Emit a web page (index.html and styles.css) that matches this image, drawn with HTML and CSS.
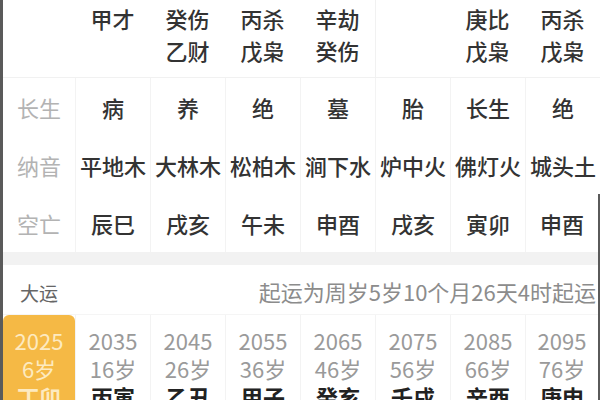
FILE: index.html
```html
<!DOCTYPE html>
<html lang="zh-CN">
<head>
<meta charset="utf-8">
<title>八字排盘</title>
<link rel="stylesheet" href="styles.css">
</head>
<body>
<div class="frame">
  <div class="pillars">
    <div class="row row-hidden">
      <div class="label"></div>
      <div class="cell"><span>甲才</span></div>
      <div class="cell"><span>癸伤</span><span>乙财</span></div>
      <div class="cell"><span>丙杀</span><span>戊枭</span></div>
      <div class="cell"><span>辛劫</span><span>癸伤</span></div>
      <div class="cell"></div>
      <div class="cell"><span>庚比</span><span>戊枭</span></div>
      <div class="cell"><span>丙杀</span><span>戊枭</span></div>
    </div>
    <div class="row">
      <div class="label">长生</div>
      <div class="cell">病</div>
      <div class="cell">养</div>
      <div class="cell">绝</div>
      <div class="cell">墓</div>
      <div class="cell">胎</div>
      <div class="cell">长生</div>
      <div class="cell">绝</div>
    </div>
    <div class="row">
      <div class="label">纳音</div>
      <div class="cell">平地木</div>
      <div class="cell">大林木</div>
      <div class="cell">松柏木</div>
      <div class="cell">涧下水</div>
      <div class="cell">炉中火</div>
      <div class="cell">佛灯火</div>
      <div class="cell">城头土</div>
    </div>
    <div class="row row-last">
      <div class="label">空亡</div>
      <div class="cell">辰巳</div>
      <div class="cell">戌亥</div>
      <div class="cell">午未</div>
      <div class="cell">申酉</div>
      <div class="cell">戌亥</div>
      <div class="cell">寅卯</div>
      <div class="cell">申酉</div>
    </div>
  </div>
  <div class="band"></div>
  <div class="dayun">
    <div class="dy-head">
      <span class="dy-title">大运</span>
      <span class="dy-info">起运为周岁5岁10个月26天4时起运</span>
    </div>
    <div class="dy-row">
      <div class="dy-cell active"><span class="yr">2025</span><span class="age">6岁</span><span class="gz">丁卯</span></div>
      <div class="dy-cell"><span class="yr">2035</span><span class="age">16岁</span><span class="gz">丙寅</span></div>
      <div class="dy-cell"><span class="yr">2045</span><span class="age">26岁</span><span class="gz">乙丑</span></div>
      <div class="dy-cell"><span class="yr">2055</span><span class="age">36岁</span><span class="gz">甲子</span></div>
      <div class="dy-cell"><span class="yr">2065</span><span class="age">46岁</span><span class="gz">癸亥</span></div>
      <div class="dy-cell"><span class="yr">2075</span><span class="age">56岁</span><span class="gz">壬戌</span></div>
      <div class="dy-cell"><span class="yr">2085</span><span class="age">66岁</span><span class="gz">辛酉</span></div>
      <div class="dy-cell"><span class="yr">2095</span><span class="age">76岁</span><span class="gz">庚申</span></div>
    </div>
  </div>
</div>
</body>
</html>
```
FILE: styles.css
```css
* { box-sizing: border-box; }
html, body {
  margin: 0;
  padding: 0;
  background: #ffffff;
  overflow: hidden;
}
body {
  width: 600px;
  height: 400px;
  font-family: "Noto Sans CJK SC", "Noto Sans", sans-serif;
}
.frame {
  width: 600px;
  height: 400px;
  border-left: 3px solid #5a5a5a;
  overflow: hidden;
}
.row {
  display: grid;
  grid-template-columns: 72px repeat(6, 75px) 1fr;
  height: 58px;
}
.row-hidden {
  height: 78px;
  border-bottom: 1px solid #f1f1f1;
}
.label {
  display: flex;
  align-items: center;
  justify-content: center;
  font-size: 22px;
  color: #b3b3b3;
}
.cell {
  display: flex;
  flex-direction: column;
  align-items: center;
  justify-content: center;
  font-size: 22px;
  font-weight: 500;
  color: #333333;
  border-left: 1px solid #f3f3f3;
  white-space: nowrap;
}
.row-hidden .cell {
  justify-content: flex-start;
  padding-top: 2px;
  line-height: 32px;
  border-left: none;
}
.row-hidden .cell:nth-child(6) {
  border-left: 1px solid #f1f1f1;
}
.row-last {
  border-right: 2px solid #5a5a5a;
}
.band {
  height: 13px;
  background: #f2f2f2;
  border-right: 2px solid #5a5a5a;
}
.dayun {
  border-right: 2px solid #5a5a5a;
}
.dy-head {
  height: 50px;
  display: flex;
  justify-content: space-between;
  align-items: flex-end;
  padding: 0 2px 12px 17px;
  border-bottom: 1px solid #f5f5f5;
}
.dy-title {
  font-size: 19px;
  line-height: 19px;
  color: #666666;
}
.dy-info {
  font-size: 22px;
  line-height: 22px;
  color: #8c8c8c;
}
.dy-row {
  display: grid;
  grid-template-columns: 72px repeat(6, 75px) 1fr;
  height: 90px;
}
.dy-cell {
  display: flex;
  flex-direction: column;
  align-items: center;
  padding-top: 11px;
  line-height: 28px;
  font-size: 22px;
  border-left: 1px solid #f3f3f3;
}
.dy-cell .yr, .dy-cell .age {
  color: #9a9a9a;
}
.dy-cell .gz {
  color: #222222;
  font-weight: 700;
}
.dy-cell.active {
  background: #f5b945;
  border-radius: 6px 6px 0 0;
  border-left: none;
}
.dy-cell.active .yr,
.dy-cell.active .age,
.dy-cell.active .gz {
  color: #fdeac0;
}
```
